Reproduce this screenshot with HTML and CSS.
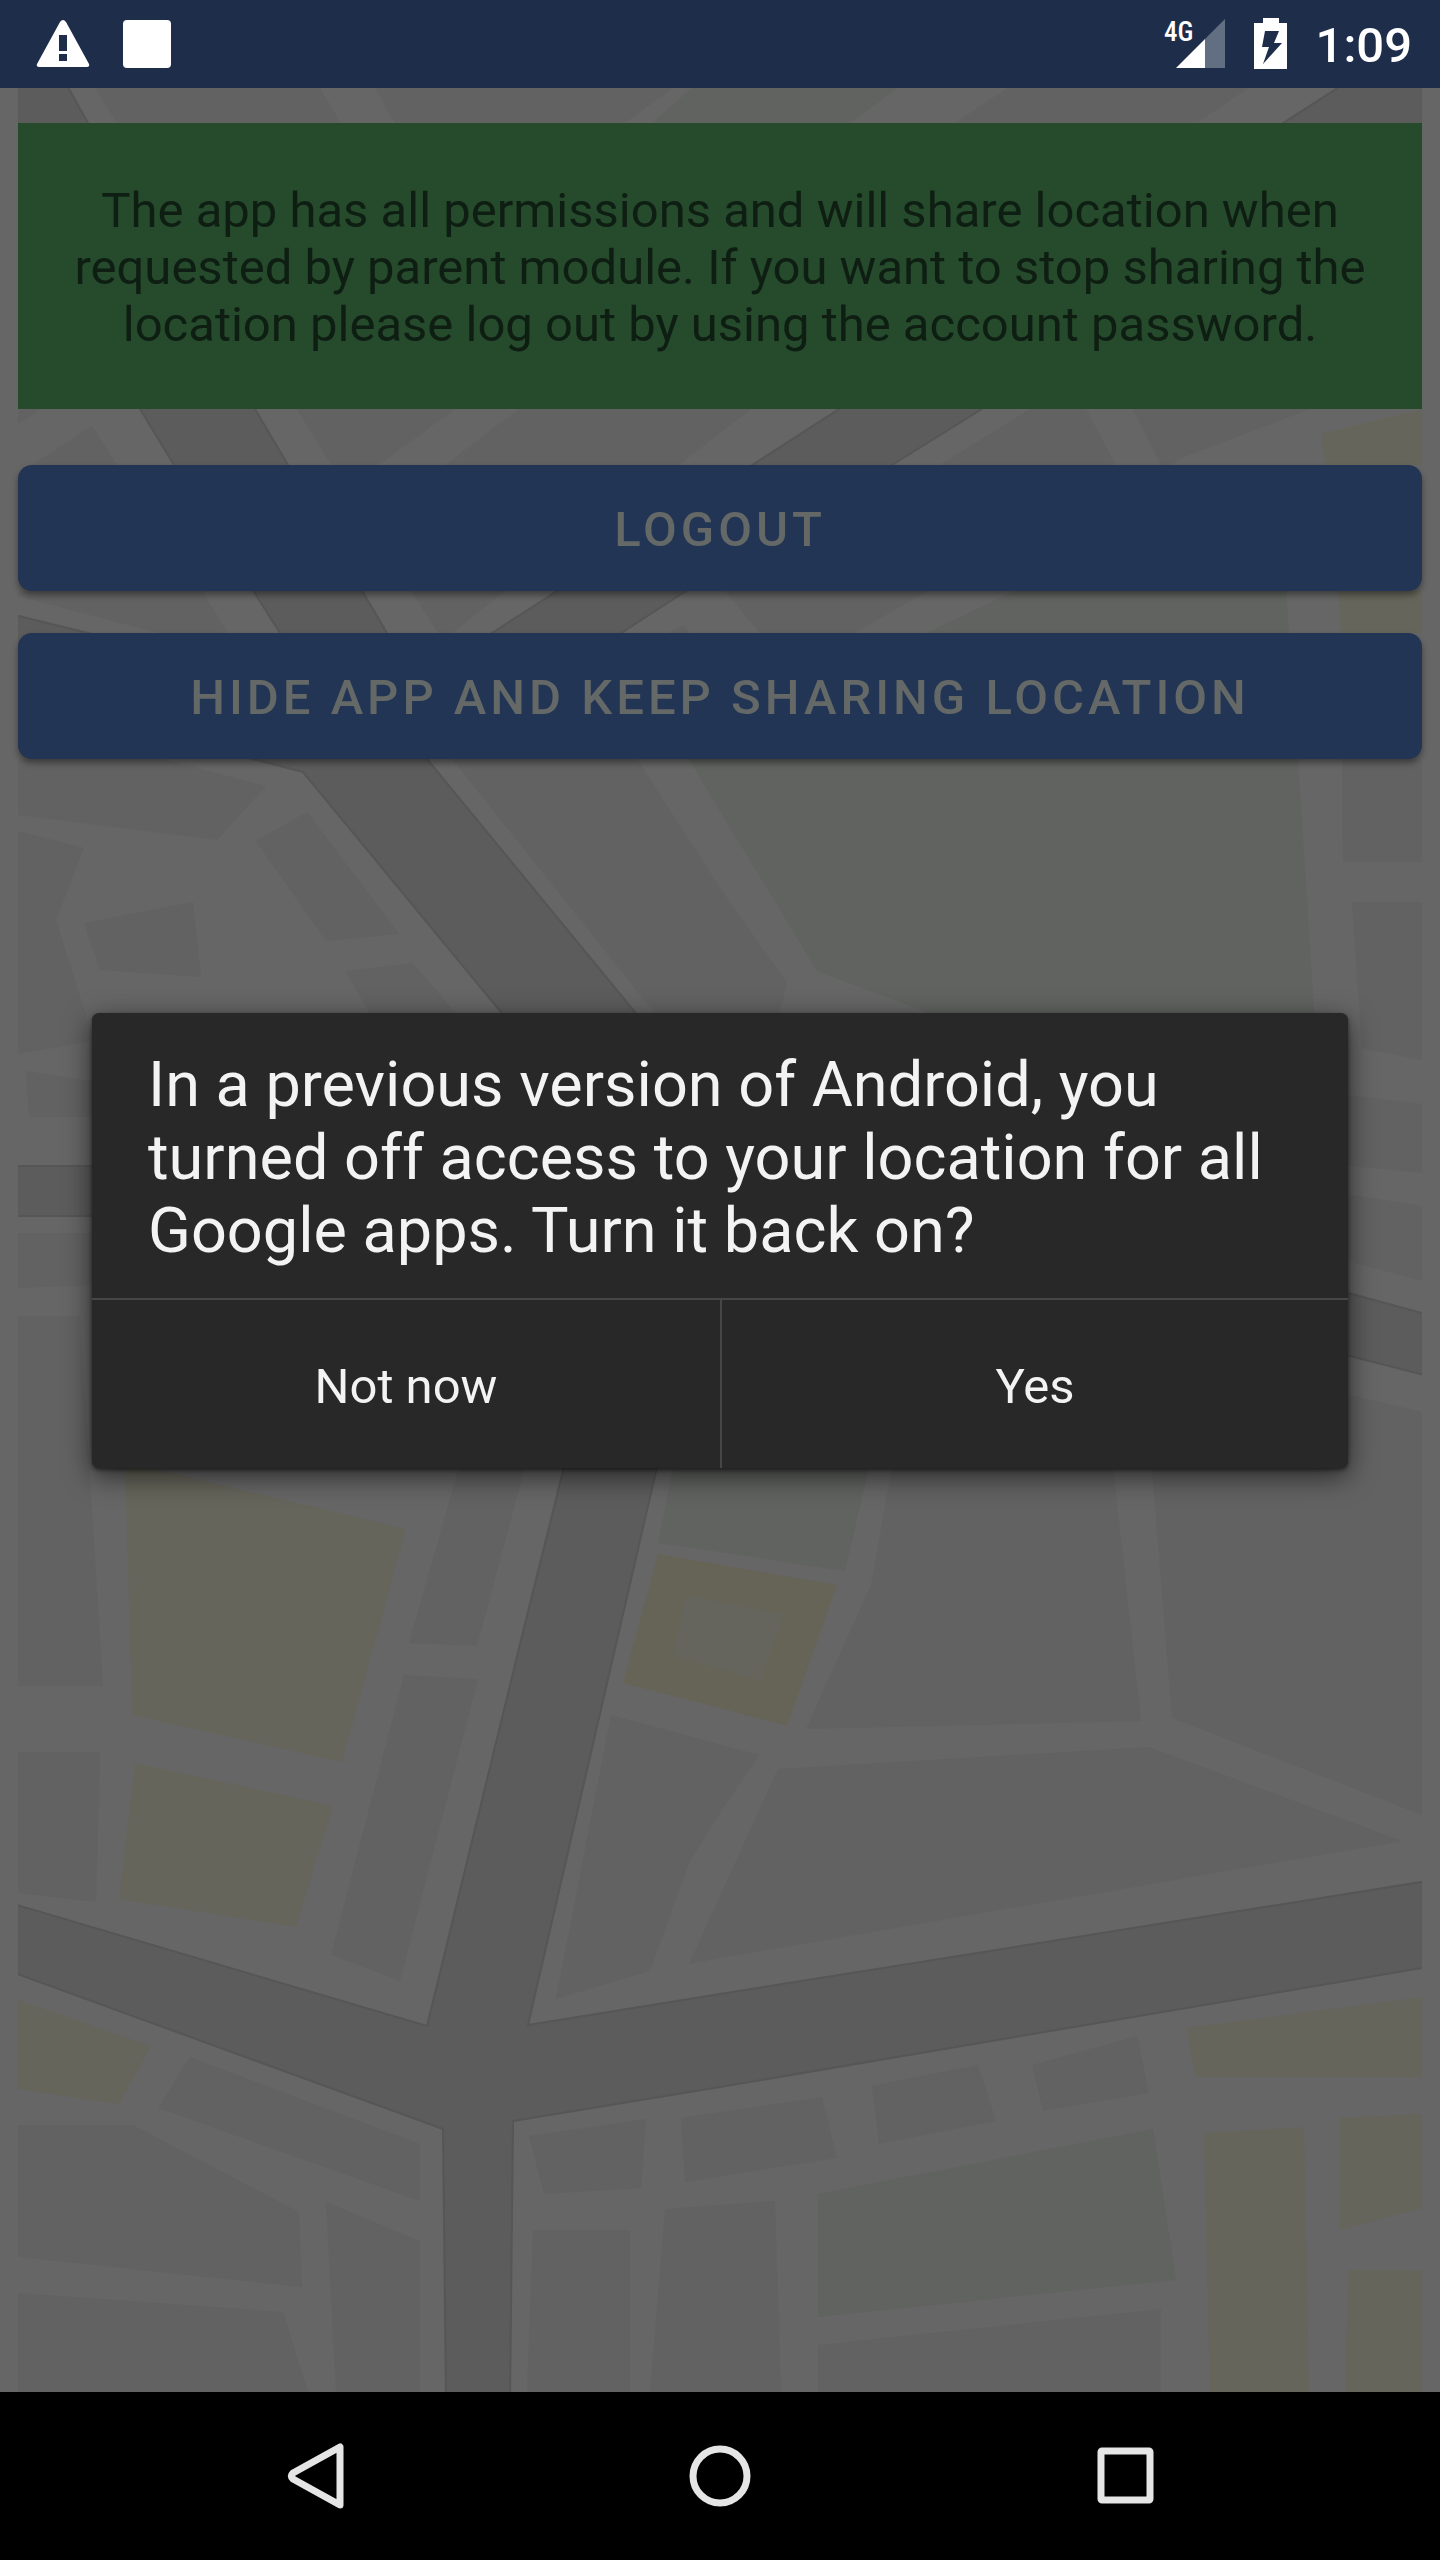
FILE: index.html
```html
<!DOCTYPE html>
<html lang="en">
<head>
<meta charset="utf-8">
<meta name="viewport" content="width=device-width, initial-scale=1">
<title>Location sharing</title>
<link rel="stylesheet" href="styles.css">
</head>
<body>
<header class="status-bar">
  <div class="status-group status-left">
    <svg class="icon" width="54" height="48" viewBox="0 0 54 48" aria-label="Warning"><path fill="#fff" fill-rule="evenodd" d="M24 2q3-4 6 0L53 44q1 3-2 3H3q-3 0-2-3zM23 15v16h8V15zM23 34v7h8v-7z"/></svg>
    <svg class="icon" width="48" height="48" viewBox="0 0 48 48" aria-label="Notification"><rect width="48" height="48" rx="4" fill="#fff"/></svg>
  </div>
  <div class="status-group status-right">
    <svg class="icon" width="62" height="66" viewBox="0 -8 62 66" aria-label="Signal"><path fill="#626f82" d="M41 20 61 0v49H41z"/><path fill="#fff" d="M12 49 41 20v29z"/><text x="0" y="22" class="network">4G</text></svg>
    <svg class="icon" width="34" height="52" viewBox="0 0 34 52" aria-label="Battery charging"><path fill="#fff" fill-rule="evenodd" d="M9 0h16v5h8v46H0V5h9zM11 13 8 29h7L9 46 28 25h-8l5-12z"/></svg>
    <time class="clock">1:09</time>
  </div>
</header>

<main class="app">
  <svg class="map" viewBox="18 88 1404 2304" preserveAspectRatio="xMidYMid slice" aria-hidden="true">
    <g class="block">
      <path d="M95 88H320L341 123H117zM375 88H673L625 123H395zM1008 88H1248L1197 123H955zM18 409H41L18 424zM92 426 117 465H32zM297 409H455L379 465H331zM519 409H751L679 465H445zM1030 409H1086L1116 465H940zM1133 409H1310L1179 459 1172 465H1161z"/>
      <path d="M18 591H202L228 633H158L18 596zM411 591H505L452 633H438zM684 625 689 633H668zM725 591H927L855 633H760zM1342 759H1422V862H1343zM1352 902H1422V1060L1362 1048z"/>
      <path d="M18 759H163L266 786 217 840 18 815zM18 831 84 848 56 920 94 1041 18 1054zM84 923 193 902 201 977 100 970zM307 812 399 934 326 941 256 841zM345 971 413 963 470 1030H380zM452 759H637L720 888 787 983 775 1030H668z"/>
      <path d="M26 1071 92 1081V1117H29zM18 1233H100V1285L18 1288zM18 1316H80L103 1686H18zM1340 1094 1422 1104V1173L1340 1165zM1340 1193 1422 1206V1281L1340 1259zM1150 1390H1330L1422 1412V1815L1172 1718 1152 1467z"/>
      <path d="M892 1467 900 1440H1110L1113 1467 1141 1721 806 1729 871 1585zM459 1467 465 1450H528L525 1467 477 1646 409 1643zM404 1675 478 1679 400 1981 331 1955zM18 1752H100L96 1902 18 1893z"/>
      <path d="M611 1715 759 1755 720 1813 689 1863 650 1971 556 1999zM778 1769 1149 1747 1402 1841 720 1958 689 1964zM190 2057 420 2144V2201L158 2108zM18 2125H133L299 2212 302 2287 18 2257zM18 2293 283 2312 308 2392H18z"/>
      <path d="M326 2202 420 2241V2392H336zM529 2136 646 2119 641 2188 544 2194zM681 2118 822 2097 837 2158 685 2182zM533 2230H630V2392H527zM665 2209 775 2201 781 2392H650zM872 2086 978 2065 996 2121 879 2144zM1032 2065 1137 2036 1149 2093 1043 2111zM818 2345 1161 2309V2392H818z"/>
    </g>
    <g class="park">
      <path d="M692 88H898L850 123H652z"/>
      <path d="M1014 591H1286L1298 759 1314 1011V1030H970L924 1011 817 971 720 811 689 759 927 633z"/>
      <path d="M677 1450H873L869 1467 845 1571 720 1552 658 1543zM818 2194 1153 2129 1176 2280 818 2317z"/>
    </g>
    <g class="site">
      <path d="M1321 434 1422 409V465H1325zM1338 591H1422V633H1341zM125 1462 406 1529 342 1762 132 1715zM135 1763 333 1806 296 1927 119 1899zM18 2000 151 2046 119 2104 18 2089z"/>
      <path d="M1186 2028 1422 1997V2077H1196zM1204 2133 1304 2127 1309 2392H1210zM1340 2118 1422 2114V2208L1340 2230zM1348 2270H1422V2392H1345z"/>
    </g>
    <path class="landmark" d="M658 1554 837 1585 787 1726 720 1708 623 1683z"/>
    <path class="landmark-core" d="M686 1595 784 1614 761 1681 672 1656z"/>
    <g class="road">
      <path d="M64 80 88 123V130H-10V80z"/>
      <path d="M133 398 140 409 174 465 280 633 312 688-10 609V689L253 759 303 772 500 1011 560 1090H700L634 1011 427 759 387 633 255 409 249 398z"/>
      <path d="M1350 80 839 409 492 633 470 650H595L686 591 892 465 982 409 1440 122V80z"/>
      <path d="M-10 1166H110V1216H-10zM1330 1288 1440 1318V1379L1330 1351z"/>
      <path d="M573 1430 564 1467 521 1640 427 2026-10 1897V1964L443 2129 446 2400H510L513 2121 720 2087 1440 1965V1879L720 1994 528 2025 617 1640 657 1467 665 1430z"/>
    </g>
  </svg>

  <section class="content">
    <p class="notice">The app has all permissions and will share location when requested by parent module. If you want to stop sharing the location please log out by using the account password.</p>
    <div class="actions">
      <button class="action" type="button">LOGOUT</button>
      <button class="action" type="button">HIDE APP AND KEEP SHARING LOCATION</button>
    </div>
  </section>

  <div class="overlay">
    <div class="dialog" role="alertdialog" aria-modal="true" aria-labelledby="dialog-message">
      <p class="dialog-message" id="dialog-message">In a previous version of Android, you turned off access to your location for all Google apps. Turn it back on?</p>
      <div class="dialog-buttons">
        <button class="dialog-button" type="button">Not now</button>
        <button class="dialog-button" type="button">Yes</button>
      </div>
    </div>
  </div>
</main>

<nav class="nav-bar">
  <button class="nav-button" type="button" aria-label="Back"><svg class="icon" width="68" height="68" viewBox="0 0 68 68"><path d="M59 5V63L12 37q-3-3 0-6z"/></svg></button>
  <button class="nav-button" type="button" aria-label="Home"><svg class="icon" width="68" height="68" viewBox="0 0 68 68"><circle cx="34" cy="34" r="27"/></svg></button>
  <button class="nav-button" type="button" aria-label="Recent apps"><svg class="icon" width="68" height="68" viewBox="0 0 68 68"><rect x="10" y="9" width="49" height="49" rx="1"/></svg></button>
</nav>
</body>
</html>
```
FILE: styles.css
```css
* {
  box-sizing: border-box;
}

body {
  margin: 0;
  min-height: 100vh;
  display: flex;
  flex-direction: column;
  background: #666;
  font-family: Roboto, "Liberation Sans", sans-serif;
}

button {
  margin: 0;
  padding: 0;
  border: 0;
  background: none;
  font-family: inherit;
}

.icon {
  display: block;
}

.status-bar {
  display: flex;
  justify-content: space-between;
  align-items: center;
  height: 88px;
  padding: 0 28px 0 36px;
  background: #1e2e4a;
  color: #fff;
}

.status-group {
  display: flex;
  align-items: center;
}

.status-left {
  gap: 33px;
}

.status-right {
  gap: 28px;
}

.network {
  font-family: "Roboto Condensed", Roboto, sans-serif;
  font-size: 27px;
  font-weight: 500;
  fill: #fff;
}

.clock {
  font-size: 49px;
  line-height: 60px;
  font-weight: 500;
  padding-top: 4px;
}

.app {
  position: relative;
  flex: 1;
  padding: 35px 18px;
}

.map {
  position: absolute;
  top: 0;
  left: 18px;
  width: calc(100% - 36px);
  height: 100%;
}

.block {
  fill: #626262;
}

.park {
  fill: #60635f;
}

.site {
  fill: #66655b;
}

.landmark {
  fill: #666456;
}

.landmark-core {
  fill: #65655d;
}

.road {
  fill: #5c5c5c;
  stroke: #565656;
  stroke-width: 2;
}

.content {
  position: relative;
}

.notice {
  margin: 0 0 56px;
  padding: 59px 48px 56px;
  background: #254b2c;
  color: #0f1e12;
  font-size: 49px;
  line-height: 57px;
  text-align: center;
}

.actions {
  display: flex;
  flex-direction: column;
  gap: 42px;
}

.action {
  height: 126px;
  border-radius: 14px;
  background: #223555;
  box-shadow: 0 4px 6px rgba(0, 0, 0, 0.4);
  color: #646866;
  font-size: 49px;
  font-weight: 500;
  letter-spacing: 4px;
  padding-top: 3px;
}

.overlay {
  position: absolute;
  inset: 0;
  display: flex;
  align-items: center;
  padding: 0 92px;
}

.dialog {
  flex: 1;
  border-radius: 7px;
  background: #282828;
  box-shadow: 0 8px 28px rgba(0, 0, 0, 0.6), 0 2px 4px rgba(0, 0, 0, 0.5);
  color: #f3f3f3;
}

.dialog-message {
  margin: 0;
  padding: 35px 56px 31px;
  font-size: 63px;
  line-height: 73px;
}

.dialog-buttons {
  display: grid;
  grid-template-columns: 1fr 1fr;
  border-top: 2px solid #464646;
}

.dialog-button {
  height: 168px;
  padding-top: 5px;
  color: inherit;
  font-size: 49px;
}

.dialog-button + .dialog-button {
  border-left: 2px solid #464646;
}

.nav-bar {
  display: grid;
  grid-template-columns: repeat(3, 1fr);
  height: 168px;
  padding: 0 112px;
  background: #000;
}

.nav-button {
  display: flex;
  align-items: center;
  justify-content: center;
}

.nav-button .icon {
  fill: none;
  stroke: #e5e5e5;
  stroke-width: 7;
  stroke-linejoin: round;
}
```
